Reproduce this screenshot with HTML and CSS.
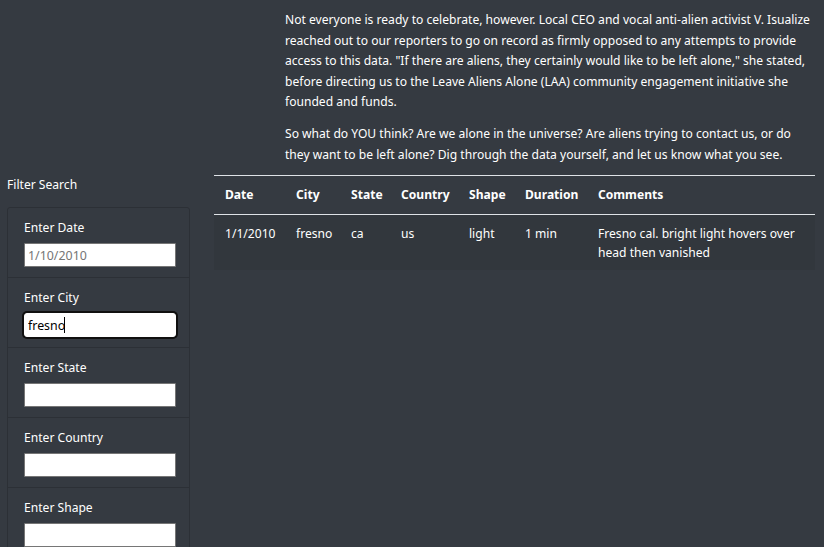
FILE: index.html
```html
<!DOCTYPE html>
<html lang="en">
<head>
<meta charset="utf-8">
<title>UFO Sightings</title>
<link rel="stylesheet" href="styles.css">
</head>
<body>
  <section class="intro">
    <p>Not everyone is ready to celebrate, however. Local CEO and vocal anti-alien activist V. Isualize reached out to our reporters to go on record as firmly opposed to any attempts to provide access to this data. "If there are aliens, they certainly would like to be left alone," she stated, before directing us to the Leave Aliens Alone (LAA) community engagement initiative she founded and funds.</p>
    <p>So what do YOU think? Are we alone in the universe? Are aliens trying to contact us, or do they want to be left alone? Dig through the data yourself, and let us know what you see.</p>
  </section>
  <div class="layout">
    <aside class="sidebar">
      <div class="sidebar-title">Filter Search</div>
      <ul class="filters">
        <li class="filter-item">
          <label class="filter-label" for="datetime">Enter Date</label>
          <input class="filter-input" id="datetime" type="text" placeholder="1/10/2010">
        </li>
        <li class="filter-item">
          <label class="filter-label" for="city">Enter City</label>
          <div class="focus-wrap"><input class="filter-input is-focused" id="city" type="text" value="fresno"><span class="caret"></span></div>
        </li>
        <li class="filter-item">
          <label class="filter-label" for="state">Enter State</label>
          <input class="filter-input" id="state" type="text">
        </li>
        <li class="filter-item">
          <label class="filter-label" for="country">Enter Country</label>
          <input class="filter-input" id="country" type="text">
        </li>
        <li class="filter-item">
          <label class="filter-label" for="shape">Enter Shape</label>
          <input class="filter-input" id="shape" type="text">
        </li>
      </ul>
    </aside>
    <main class="results">
      <table class="ufo-table">
        <colgroup>
          <col class="c-date"><col class="c-city"><col class="c-state"><col class="c-country"><col class="c-shape"><col class="c-duration"><col class="c-comments">
        </colgroup>
        <thead>
          <tr><th>Date</th><th>City</th><th>State</th><th>Country</th><th>Shape</th><th>Duration</th><th>Comments</th></tr>
        </thead>
        <tbody>
          <tr><td>1/1/2010</td><td>fresno</td><td>ca</td><td>us</td><td>light</td><td>1 min</td><td>Fresno cal. bright light hovers over head then vanished</td></tr>
        </tbody>
      </table>
    </main>
  </div>
</body>
</html>
```
FILE: styles.css
```css
html {
  overflow: hidden;
}
body {
  margin: 0;
  background: #353a41;
  color: #ffffff;
  font-family: "Noto Sans", Roboto, sans-serif;
  font-size: 12.1px;
  line-height: 20.5px;
}
.intro {
  padding: 10px 9px 0 285px;
}
.intro p {
  margin: 0 0 11.5px;
}
.intro p:last-child {
  margin-bottom: 10px;
}
.layout {
  display: flex;
  align-items: flex-start;
}
.sidebar {
  width: 183px;
  padding-left: 7px;
  flex: none;
}
.sidebar-title {
  margin-bottom: 11.5px;
}
.filters {
  list-style: none;
  margin: 0;
  padding: 0;
  border: 1px solid #2c3036;
  border-radius: 3px;
}
.filter-item {
  padding: 10px 13px 10px 16px;
  border-top: 1px solid #2c3036;
  display: flex;
  flex-direction: column;
  align-items: flex-start;
}
.filter-item:first-child {
  border-top: none;
}
.filter-label {
  display: block;
  margin-bottom: 4.5px;
}
.filter-input {
  box-sizing: border-box;
  width: 152px;
  height: 24px;
  margin: 0;
  padding: 1px 3px;
  border: 1px solid #767676;
  border-radius: 1px;
  background: #ffffff;
  color: #000000;
  font-family: inherit;
  font-size: 12.4px;
  outline: none;
}
.filter-input::placeholder {
  color: #757575;
}
.focus-wrap {
  position: relative;
}
.filter-input.is-focused {
  border: 1px solid #ffffff;
  border-radius: 3px;
  box-shadow: 0 0 0 2px #101010;
}
.caret {
  position: absolute;
  left: 40px;
  top: 4px;
  width: 1px;
  height: 16px;
  background: #000000;
}
.results {
  margin-left: 24px;
  width: 601px;
  flex: none;
}
.ufo-table {
  width: 601px;
  border-collapse: collapse;
  table-layout: fixed;
}
.c-date { width: 71px; }
.c-city { width: 55px; }
.c-state { width: 50px; }
.c-country { width: 68px; }
.c-shape { width: 56px; }
.c-duration { width: 73px; }
.c-comments { width: 228px; }
.ufo-table th,
.ufo-table td {
  text-align: left;
  vertical-align: top;
}
.ufo-table th {
  font-weight: 700;
  border-top: 1px solid #dee2e6;
  border-bottom: 1px solid #dee2e6;
  padding: 9px 11px 8px;
}
.ufo-table td {
  padding: 9px 11px 8px;
  line-height: 19px;
}
.ufo-table tbody tr {
  background: rgba(0, 0, 0, 0.05);
}
```
